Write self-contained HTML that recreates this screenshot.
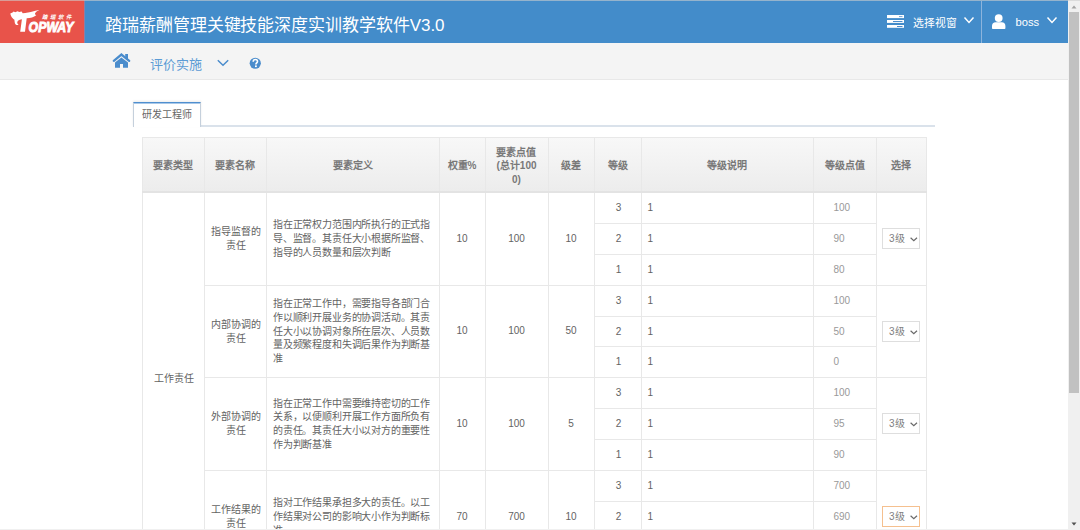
<!DOCTYPE html><html lang="zh-CN"><head><meta charset="utf-8"><style>
*{box-sizing:border-box}
html,body{margin:0;padding:0}
body{width:1080px;height:530px;overflow:hidden;position:relative;background:#fff;font-family:"Liberation Sans",sans-serif;color:#393939}
.a{position:absolute}
#topline{left:0;top:0;width:1080px;height:1px;background:rgba(205,205,205,.6);z-index:2}
#hdr{left:0;top:0;width:1068px;height:43px;background:#438cca}
#logo{left:0;top:0;width:84px;height:43px;background:#e8534a}
#title{left:105px;top:14px;font-size:17px;letter-spacing:-0.07px;color:#fff;white-space:nowrap;line-height:24px}
#nav{left:0;top:43px;width:1068px;height:37px;background:#f4f4f4;border-bottom:1px solid #e8e8e8}
#sb{left:1068px;top:0;width:12px;height:530px;background:#f0f0f0}
#thumb{left:1069px;top:12px;width:10px;height:381px;background:#c1c1c1}
.vl{position:absolute;width:1px;background:#e8e8e8}
.hl{position:absolute;height:1px;background:#e8e8e8}
.th{position:absolute;display:flex;align-items:center;justify-content:center;text-align:center;font-size:10px;font-weight:bold;color:#787878;line-height:13.4px;padding-top:2.6px}
.td{position:absolute;display:flex;align-items:center;justify-content:center;text-align:center;font-size:10px;color:#636363;line-height:13.7px;white-space:nowrap}
.def{justify-content:flex-start;text-align:left;padding-left:6px;letter-spacing:-0.18px}
.val{justify-content:flex-start;padding-left:0}
.sel{position:absolute;width:38px;height:21px;border:1px solid #dcdcdc;background:#fff;font-size:10px;color:#808080;line-height:19px;padding-left:6px}
.sel svg{position:absolute;left:27px;top:8px}
</style></head><body>
<div class="a" id="hdr"></div><div class="a" id="logo"></div><div class="a" id="topline"></div><div class="a" style="left:84px;top:0;width:1px;height:43px;background:#8a80a6"></div>
<div class="a" id="title">踏瑞薪酬管理关键技能深度实训教学软件V3.0</div>
<div class="a" id="nav"></div>
<svg class="a" style="left:0;top:1px" width="84" height="41" viewBox="0 0 84 41">
<path d="M10.3 13.4 L12.5 12.4 L13.7 11.4 L15.2 12.2 L17.6 11.2 L19.2 12 L21.6 11.5 L22.7 13.2 C26 12.8 30 12.2 33.5 11.2 C35.5 10.6 37.5 10.1 39.4 10 C37.5 10.8 36 11.8 35.2 13 C34.8 13.8 35 14.5 36.3 15.2 C35 16.3 33.5 17 32 17.4 C30.5 17.8 28.5 18.1 26.7 18.2 L25 31.7 L20.2 31.7 L21.9 19.2 C20.5 19.3 19 19.8 18 20.8 C17 22 16.8 23.5 18.6 25 C16.8 25.3 15.3 24.6 14.9 23.2 C14.5 21.5 14.6 20.3 14.2 19.6 C13 18.7 11.8 17.5 11.2 16.2 C10.8 15.4 10.5 14.5 10.3 13.4 Z" fill="#fff" transform="translate(0,-1)"/>
<text x="28.6" y="30.7" font-family="Liberation Sans" font-weight="bold" font-style="italic" font-size="14.3" fill="#fff" stroke="#fff" stroke-width="0.9" textLength="45" lengthAdjust="spacingAndGlyphs">OPWAY</text>
<text x="41.8" y="18" font-family="Liberation Sans" font-weight="bold" font-size="5.4" font-style="italic" fill="#fff" textLength="29.5" lengthAdjust="spacing">踏瑞软件</text>
</svg>
<svg class="a" style="left:108px;top:50px" width="28" height="22" viewBox="0 0 28 22">
<rect x="17.2" y="4" width="2.8" height="5" fill="#4a8ccc"/>
<polyline points="5.8,10.8 13.4,4.6 21.2,10.8" fill="none" stroke="#4a8ccc" stroke-width="2.3" stroke-linecap="round" stroke-linejoin="miter"/>
<polygon points="7,12.6 13.4,7.4 20,12.6 20,17.8 15,17.8 15,13.9 12,13.9 12,17.8 7,17.8" fill="#4a8ccc"/>
</svg>
<div class="a" style="left:150px;top:57px;font-size:13px;color:#5b9bd5;line-height:16px;white-space:nowrap">评价实施</div>
<svg class="a" style="left:212px;top:52px" width="54" height="22" viewBox="0 0 54 22">
<polyline points="5.8,8.2 11,13.2 16.2,8.2" fill="none" stroke="#4a8ccc" stroke-width="1.5"/>
<circle cx="43.25" cy="11.25" r="5.6" fill="#4a8ccc"/>
<path d="M41.2 9.7 C41.2 8.2 42.2 7.5 43.4 7.5 C44.7 7.5 45.5 8.3 45.5 9.4 C45.5 10.8 43.9 11 43.9 12.4" fill="none" stroke="#fff" stroke-width="1.6"/>
<rect x="43" y="13.4" width="1.8" height="1.7" fill="#fff"/>
</svg>
<svg class="a" style="left:880px;top:10px" width="30" height="22" viewBox="0 0 30 22">
<rect x="7" y="5" width="17" height="3.1" fill="#fff"/>
<rect x="7" y="10" width="17" height="2.9" fill="#fff"/>
<rect x="7" y="15" width="17" height="2.8" fill="#fff"/>
<rect x="19" y="6.1" width="3.5" height="1" fill="#6fa3d6"/>
<rect x="13" y="11" width="9.5" height="1" fill="#4a8ccc"/>
<rect x="17" y="16" width="5.5" height="1" fill="#4a8ccc"/>
</svg>
<div class="a" style="left:913px;top:14.8px;font-size:10.8px;color:#fff;line-height:16px;white-space:nowrap">选择视窗</div>
<div class="a" style="left:981px;top:1px;width:1px;height:42px;background:#8db4dc"></div>
<svg class="a" style="left:960px;top:10px" width="100" height="22" viewBox="0 0 100 22">
<polyline points="4.5,7.6 9,12.4 13.5,7.6" fill="none" stroke="#fff" stroke-width="1.5"/>
<circle cx="38.7" cy="8.1" r="3.9" fill="#fff"/>
<path d="M32 18.2 L32 16 Q32 12.2 35.8 12.2 L41.6 12.2 Q45.4 12.2 45.4 16 L45.4 18.2 Q45.4 19 44.6 19 L32.8 19 Q32 19 32 18.2 Z" fill="#fff"/>
<polyline points="87.5,7.6 92,12.4 96.5,7.6" fill="none" stroke="#fff" stroke-width="1.5"/>
</svg>
<div class="a" style="left:1015.5px;top:13.6px;font-size:11.2px;color:#fff;line-height:16px;white-space:nowrap">boss</div>
<div class="a" style="left:133px;top:125px;width:802px;height:2px;background:#dae2eb"></div>
<div class="a" style="left:133px;top:102px;width:68px;height:25px;background:#fff;border:1px solid #c5d0dc;border-top:1px solid #4f8fcf;border-bottom:0;box-shadow:0 -1px 2px rgba(0,0,0,.08),inset 0 1px 0 #a9c8e8"></div>
<div class="a" style="left:142px;top:107px;font-size:10px;color:#666;line-height:16px">研发工程师</div>
<div class="a" style="left:142px;top:137px;width:784px;height:55px;background:linear-gradient(#f8f8f8,#ececec)"></div>
<div class="th" style="left:142px;top:137px;width:62px;height:55px">要素类型</div>
<div class="th" style="left:204px;top:137px;width:62px;height:55px">要素名称</div>
<div class="th" style="left:266px;top:137px;width:173px;height:55px">要素定义</div>
<div class="th" style="left:439px;top:137px;width:46px;height:55px">权重%</div>
<div class="th" style="left:485px;top:137px;width:63px;height:55px">要素点值<br>(总计100<br>0)</div>
<div class="th" style="left:548px;top:137px;width:46px;height:55px">级差</div>
<div class="th" style="left:594px;top:137px;width:47px;height:55px">等级</div>
<div class="th" style="left:641px;top:137px;width:172px;height:55px">等级说明</div>
<div class="th" style="left:813px;top:137px;width:63px;height:55px">等级点值</div>
<div class="th" style="left:876px;top:137px;width:50px;height:55px">选择</div>
<div class="vl" style="left:142px;top:137px;height:393px"></div>
<div class="vl" style="left:204px;top:137px;height:393px"></div>
<div class="vl" style="left:266px;top:137px;height:393px"></div>
<div class="vl" style="left:439px;top:137px;height:393px"></div>
<div class="vl" style="left:485px;top:137px;height:393px"></div>
<div class="vl" style="left:548px;top:137px;height:393px"></div>
<div class="vl" style="left:594px;top:137px;height:393px"></div>
<div class="vl" style="left:641px;top:137px;height:393px"></div>
<div class="vl" style="left:813px;top:137px;height:393px"></div>
<div class="vl" style="left:876px;top:137px;height:393px"></div>
<div class="vl" style="left:926px;top:137px;height:393px"></div>
<div class="hl" style="left:142px;top:137px;width:785px"></div>
<div class="hl" style="left:142px;top:191px;width:785px;height:2px;background:#e3e3e3"></div>
<div class="hl" style="left:204px;top:285px;width:723px"></div>
<div class="td" style="left:205px;top:192.5px;width:62px;height:93px">指导监督的<br>责任</div>
<div class="td def" style="left:267px;top:192.5px;width:173px;height:93px">指在正常权力范围内所执行的正式指<br>导、监督。其责任大小根据所监督、<br>指导的人员数量和层次判断</div>
<div class="td" style="left:439px;top:192px;width:46px;height:93px">10</div>
<div class="td" style="left:485px;top:192px;width:63px;height:93px">100</div>
<div class="td" style="left:548px;top:192px;width:46px;height:93px">10</div>
<div class="hl" style="left:594px;top:223px;width:283px"></div>
<div class="td" style="left:595px;top:192.5px;width:47px;height:31px">3</div>
<div class="td val" style="left:647.5px;top:192.5px;width:60px;height:31px">1</div>
<div class="td val" style="left:833.5px;top:192.5px;width:40px;height:31px;color:#999">100</div>
<div class="hl" style="left:594px;top:254px;width:283px"></div>
<div class="td" style="left:595px;top:223.5px;width:47px;height:31px">2</div>
<div class="td val" style="left:647.5px;top:223.5px;width:60px;height:31px">1</div>
<div class="td val" style="left:833.5px;top:223.5px;width:40px;height:31px;color:#999">90</div>
<div class="td" style="left:595px;top:254.5px;width:47px;height:31px">1</div>
<div class="td val" style="left:647.5px;top:254.5px;width:60px;height:31px">1</div>
<div class="td val" style="left:833.5px;top:254.5px;width:40px;height:31px;color:#999">80</div>
<div class="sel" style="left:882px;top:228px;border-color:#dedede">3级<svg width="8" height="6" viewBox="0 0 8 6"><path d="M0.6 0.7L3.8 3.7L7 0.7" fill="none" stroke="#6a6a6a" stroke-width="1.2"/></svg></div>
<div class="hl" style="left:204px;top:377px;width:723px"></div>
<div class="td" style="left:205px;top:285.5px;width:62px;height:92px">内部协调的<br>责任</div>
<div class="td def" style="left:267px;top:285.5px;width:173px;height:92px">指在正常工作中，需要指导各部门合<br>作以顺利开展业务的协调活动。其责<br>任大小以协调对象所在层次、人员数<br>量及频繁程度和失调后果作为判断基<br>准</div>
<div class="td" style="left:439px;top:285px;width:46px;height:92px">10</div>
<div class="td" style="left:485px;top:285px;width:63px;height:92px">100</div>
<div class="td" style="left:548px;top:285px;width:46px;height:92px">50</div>
<div class="hl" style="left:594px;top:316px;width:283px"></div>
<div class="td" style="left:595px;top:285.5px;width:47px;height:31px">3</div>
<div class="td val" style="left:647.5px;top:285.5px;width:60px;height:31px">1</div>
<div class="td val" style="left:833.5px;top:285.5px;width:40px;height:31px;color:#999">100</div>
<div class="hl" style="left:594px;top:346px;width:283px"></div>
<div class="td" style="left:595px;top:316.5px;width:47px;height:30px">2</div>
<div class="td val" style="left:647.5px;top:316.5px;width:60px;height:30px">1</div>
<div class="td val" style="left:833.5px;top:316.5px;width:40px;height:30px;color:#999">50</div>
<div class="td" style="left:595px;top:346.5px;width:47px;height:31px">1</div>
<div class="td val" style="left:647.5px;top:346.5px;width:60px;height:31px">1</div>
<div class="td val" style="left:833.5px;top:346.5px;width:40px;height:31px;color:#999">0</div>
<div class="sel" style="left:882px;top:321px;border-color:#dedede">3级<svg width="8" height="6" viewBox="0 0 8 6"><path d="M0.6 0.7L3.8 3.7L7 0.7" fill="none" stroke="#6a6a6a" stroke-width="1.2"/></svg></div>
<div class="hl" style="left:204px;top:470px;width:723px"></div>
<div class="td" style="left:205px;top:377.5px;width:62px;height:93px">外部协调的<br>责任</div>
<div class="td def" style="left:267px;top:377.5px;width:173px;height:93px">指在正常工作中需要维持密切的工作<br>关系，以便顺利开展工作方面所负有<br>的责任。其责任大小以对方的重要性<br>作为判断基准</div>
<div class="td" style="left:439px;top:377px;width:46px;height:93px">10</div>
<div class="td" style="left:485px;top:377px;width:63px;height:93px">100</div>
<div class="td" style="left:548px;top:377px;width:46px;height:93px">5</div>
<div class="hl" style="left:594px;top:408px;width:283px"></div>
<div class="td" style="left:595px;top:377.5px;width:47px;height:31px">3</div>
<div class="td val" style="left:647.5px;top:377.5px;width:60px;height:31px">1</div>
<div class="td val" style="left:833.5px;top:377.5px;width:40px;height:31px;color:#999">100</div>
<div class="hl" style="left:594px;top:439px;width:283px"></div>
<div class="td" style="left:595px;top:408.5px;width:47px;height:31px">2</div>
<div class="td val" style="left:647.5px;top:408.5px;width:60px;height:31px">1</div>
<div class="td val" style="left:833.5px;top:408.5px;width:40px;height:31px;color:#999">95</div>
<div class="td" style="left:595px;top:439.5px;width:47px;height:31px">1</div>
<div class="td val" style="left:647.5px;top:439.5px;width:60px;height:31px">1</div>
<div class="td val" style="left:833.5px;top:439.5px;width:40px;height:31px;color:#999">90</div>
<div class="sel" style="left:882px;top:413px;border-color:#dedede">3级<svg width="8" height="6" viewBox="0 0 8 6"><path d="M0.6 0.7L3.8 3.7L7 0.7" fill="none" stroke="#6a6a6a" stroke-width="1.2"/></svg></div>
<div class="hl" style="left:204px;top:563px;width:723px"></div>
<div class="td" style="left:205px;top:470.5px;width:62px;height:93px">工作结果的<br>责任</div>
<div class="td def" style="left:267px;top:470.5px;width:173px;height:93px">指对工作结果承担多大的责任。以工<br>作结果对公司的影响大小作为判断标<br>准</div>
<div class="td" style="left:439px;top:470px;width:46px;height:93px">70</div>
<div class="td" style="left:485px;top:470px;width:63px;height:93px">700</div>
<div class="td" style="left:548px;top:470px;width:46px;height:93px">10</div>
<div class="hl" style="left:594px;top:501px;width:283px"></div>
<div class="td" style="left:595px;top:470.5px;width:47px;height:31px">3</div>
<div class="td val" style="left:647.5px;top:470.5px;width:60px;height:31px">1</div>
<div class="td val" style="left:833.5px;top:470.5px;width:40px;height:31px;color:#999">700</div>
<div class="hl" style="left:594px;top:532px;width:283px"></div>
<div class="td" style="left:595px;top:501.5px;width:47px;height:31px">2</div>
<div class="td val" style="left:647.5px;top:501.5px;width:60px;height:31px">1</div>
<div class="td val" style="left:833.5px;top:501.5px;width:40px;height:31px;color:#999">690</div>
<div class="td" style="left:595px;top:532.5px;width:47px;height:31px">1</div>
<div class="td val" style="left:647.5px;top:532.5px;width:60px;height:31px">1</div>
<div class="td val" style="left:833.5px;top:532.5px;width:40px;height:31px;color:#999">680</div>
<div class="sel" style="left:882px;top:506px;border-color:#f5c08f">3级<svg width="8" height="6" viewBox="0 0 8 6"><path d="M0.6 0.7L3.8 3.7L7 0.7" fill="none" stroke="#6a6a6a" stroke-width="1.2"/></svg></div>
<div class="td" style="left:142.5px;top:368.8px;width:62px;height:20px">工作责任</div>
<div class="a" style="left:0;top:529px;width:1068px;height:1px;background:#f0f0f0"></div>
<div class="a" id="sb"></div><div class="a" id="thumb"></div>
<svg class="a" style="left:1068px;top:0" width="12" height="530"><path d="M3.5 8.5 L6 5.5 L8.5 8.5 Z" fill="#a3a3a3"/><path d="M3.5 522.5 L6 525.5 L8.5 522.5 Z" fill="#505050"/></svg>
</body></html>
